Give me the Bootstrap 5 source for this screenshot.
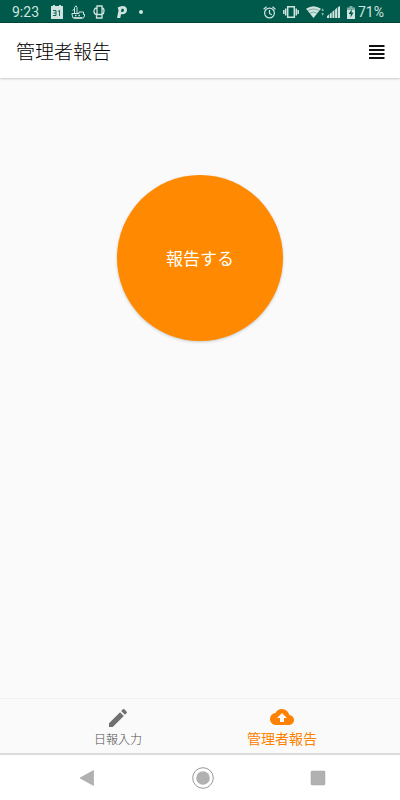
<!DOCTYPE html>
<html lang="ja">
<head>
<meta charset="utf-8">
<meta name="viewport" content="width=device-width, initial-scale=1">
<title>管理者報告</title>
<link href="https://cdn.jsdelivr.net/npm/bootstrap@5.3.0/dist/css/bootstrap.min.css" rel="stylesheet">
<style>
  body { font-family: Roboto, "Noto Sans CJK JP", sans-serif; background: #fafafa; }
  svg { display: block; flex: none; }
  .status-bar { background: #005a4b; color: #cfe3df; height: 23px; font-size: 14px; line-height: 22px; padding: 2px 16px 0 12px; border-bottom: 1px solid #004437; }
  .status-left { gap: 8px; }
  .status-right { gap: 3px; }
  .app-bar { height: 55px; padding: 4px 15px 0 16px; box-shadow: 0 1px 2px rgba(0,0,0,.2); }
  .app-title { font-size: 19px; line-height: 26px; color: #000; font-weight: 300; }
  .report-area { padding-top: 97px; }
  .report-btn, .report-btn:hover { width: 166px; height: 166px; padding: 3px 0 0; background: #ff8900; color: #fff; font-size: 17px; box-shadow: 0 1px 3px rgba(0,0,0,.2); }
  .tab-bar { height: 57px; background: #fafafa; border-top: 1px solid #f0f0f0; border-bottom: 2px solid #dcdcdc; }
  .tab-item { width: 164px; color: #505050; font-size: 12px; line-height: 20px; padding-top: 7px; font-weight: 300; }
  .tab-item.active { color: #ff8100; font-size: 14px; padding-top: 6px; font-weight: 400; }
  .system-nav { height: 45px; gap: 91px; padding: 0 0 0 5px; }
  .system-nav .btn { width: 24px; height: 24px; }
</style>
<script src="https://cdn.jsdelivr.net/npm/bootstrap@5.3.0/dist/js/bootstrap.bundle.min.js"></script>
</head>
<body class="d-flex flex-column min-vh-100">
<div class="status-bar d-flex justify-content-between align-items-center">
  <div class="status-left d-flex align-items-center">
    <span>9:23</span>
    <svg class="ms-1" width="12" height="14" viewBox="0 0 12 14"><path fill="#cfe3df" d="M0 1h2V0h2v1h4V0h2v1h2v13H0z"/><path fill="none" stroke="#005a4b" stroke-width=".9" d="M2 5.500h3v5H2M2.500 8H5M7 6.500l1.500-1V11"/></svg>
    <svg width="14" height="14" viewBox="0 0 14 14" fill="none" stroke="#cfe3df"><path d="M3.500 8V2.500L5 .8l1 1.700V8M3.500 4l-2 1.500M1 8.500h7V7h4.500v2.500H14l-1.500 3.500H2L.8 8.500"/><path d="M4 10.500h1.500m2 0H9M3 13h8" stroke-width="1.500"/></svg>
    <svg width="12" height="14" viewBox="0 0 12 14" fill="none" stroke="#cfe3df" stroke-width="1.300"><path d="M4 1h5v8.500H4zM4 3C1.500 3 1 5 1 6.500s.5 3 3 3M9 3c1.500 0 2 1 2 3s-.5 3-2 3.500V13H3.500V9.500"/></svg>
    <svg class="ms-1" width="10" height="12" viewBox="0 0 10 12"><path fill="#cfe3df" fill-rule="evenodd" d="M.7 1.500Q3 0 5.500 0C8.300 0 10 1.600 10 4S8.200 8.300 5.300 8.300H4L3.300 12H0L1.500 4.500zM4.600 2.800L4 6h1.200c1.200 0 1.800-.7 1.800-1.700 0-1-.6-1.500-1.600-1.500z"/></svg>
    <svg width="12" height="12" viewBox="0 0 12 12"><circle cx="6" cy="6" r="2" fill="#cfe3df"/></svg>
  </div>
  <div class="status-right d-flex align-items-center">
    <svg width="13" height="13" viewBox="0 0 13 13" fill="none" stroke="#cfe3df" stroke-width="1.200"><circle cx="6.500" cy="7" r="4.900"/><path d="M6.500 4v3.500l2.300 1.300M.6 3.200L3.500.8M12.400 3.200L9.500.8"/></svg>
    <svg class="mx-1" width="16" height="12" viewBox="0 0 16 12" fill="none" stroke="#cfe3df" stroke-width="1.500"><path d="M4.700.8h6.600v10.400H4.700zM2.700 2.500v7M13.300 2.500v7M.8 4v4M15.200 4v4"/></svg>
    <svg width="18" height="12" viewBox="0 0 18 12"><path fill="#cfe3df" d="M7.500 12L0 2.800Q7.500-2.500 15 2.800z"/><path d="M1 5q6.500-4 13 0M3 7.500q4.500-3 9 0" fill="none" stroke="#005a4b" stroke-width=".4"/><path fill="#7fb0a7" d="M15.300 5l1.400-3L18 5zM15.300 7H18l-1.300 3z"/></svg>
    <svg width="13" height="12" viewBox="0 0 13 12"><path fill="#cfe3df" d="M0 12v-2l2-1.500V12zM2.700 12V8l2-1.800V12zM5.400 12V5.700l2-1.800V12zM8.100 12V3.500l2-1.800V12zM10.800 12V1.200L13 0v12z"/></svg>
    <svg class="ms-1" width="8" height="13" viewBox="0 0 8 13"><path fill="#7fb0a7" d="M0 1.500h2.500V0h3v1.500H8V5H0z"/><path fill="#cfe3df" d="M0 4h8v9H0z"/><path fill="#005a4b" d="M4.800 3L1.700 8h2v3.500L6.500 6.500H4.600z"/></svg>
    <span>71%</span>
  </div>
</div>
<header class="app-bar bg-white d-flex justify-content-between align-items-center">
  <h1 class="app-title mb-0">管理者報告</h1>
  <button class="btn p-0 border-0" type="button" aria-label="メニュー">
    <svg width="16" height="20" viewBox="0 0 16 20"><path d="M0 3h15.500M0 7h15.500M0 11h15.500M0 15h15.500" stroke="#111" stroke-width="2"/></svg>
  </button>
</header>
<main class="report-area flex-grow-1 text-center">
  <button class="report-btn btn border-0 rounded-circle" type="button">報告する</button>
</main>
<nav class="tab-bar d-flex justify-content-center">
  <a class="tab-item d-flex flex-column align-items-center text-decoration-none" href="#">
    <svg width="24" height="24" viewBox="0 0 24 24"><path fill="#707070" d="M3 17.250V21h3.750L17.810 9.940l-3.750-3.750zM20.710 7.040a1 1 0 0 0 0-1.410l-2.340-2.340a1 1 0 0 0-1.410 0l-1.830 1.830 3.750 3.750z"/></svg>
    <span>日報入力</span>
  </a>
  <a class="tab-item active d-flex flex-column align-items-center text-decoration-none" href="#" aria-current="page">
    <svg width="24" height="24" viewBox="0 0 24 24"><path fill="#ff8100" d="M19.350 10.040A7.490 7.490 0 0 0 12 4C9.110 4 6.600 5.640 5.350 8.040A5.994 5.994 0 0 0 0 14c0 3.310 2.690 6 6 6h13c2.760 0 5-2.240 5-5 0-2.640-2.050-4.780-4.650-4.960zM14 13v4h-4v-4H7l5-5 5 5z"/></svg>
    <span>管理者報告</span>
  </a>
</nav>
<div class="system-nav bg-white d-flex justify-content-center align-items-center">
  <button class="btn p-0 border-0" type="button" aria-label="戻る"><svg width="24" height="24" viewBox="0 0 24 24"><path fill="#b1b1b1" stroke="#999" stroke-width=".5" d="M4 12L17.500 4.500v15z"/></svg></button>
  <button class="btn p-0 border-0" type="button" aria-label="ホーム"><svg width="24" height="24" viewBox="0 0 24 24"><circle cx="12" cy="12" r="10.300" fill="none" stroke="#999"/><circle cx="12" cy="12" r="6.800" fill="#b1b1b1"/></svg></button>
  <button class="btn p-0 border-0" type="button" aria-label="履歴"><svg width="24" height="24" viewBox="0 0 24 24"><rect x="5" y="5" width="14" height="14" rx="1" fill="#b1b1b1" stroke="#a4a4a4" stroke-width=".5"/></svg></button>
</div>
</body>
</html>
